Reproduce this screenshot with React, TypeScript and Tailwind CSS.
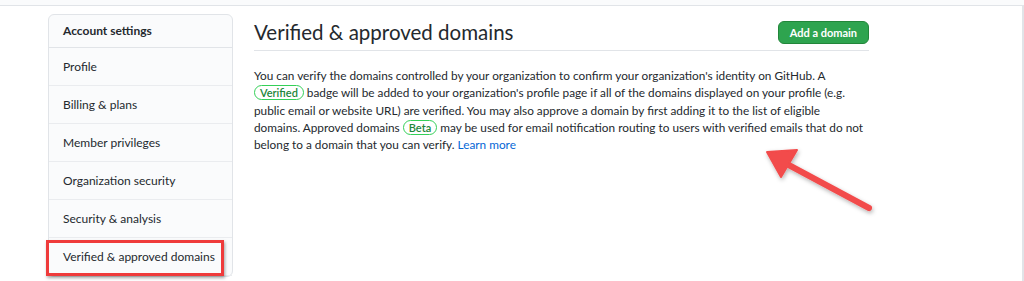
import React from 'react';

const navItems = [
  'Profile',
  'Billing & plans',
  'Member privileges',
  'Organization security',
  'Security & analysis',
  'Verified & approved domains',
];

const Badge = ({ children }: { children: React.ReactNode }) => (
  <span className="inline-block rounded-full border border-[#34d058] px-[5px] text-[11px] leading-[11px] py-[1px] font-semibold text-[#22863a]">
    {children}
  </span>
);

const Arrow = () => (
  <svg className="absolute left-[755px] top-[140px]" width="130" height="85" viewBox="0 0 130 85">
    <defs>
      <filter id="sh" x="-20%" y="-20%" width="140%" height="140%">
        <feDropShadow dx="1" dy="2" stdDeviation="2" floodColor="#000" floodOpacity="0.3" />
      </filter>
    </defs>
    <g filter="url(#sh)" fill="#f24b4b" stroke="#f24b4b">
      <line x1="114" y1="68" x2="30" y2="23" strokeWidth="6" strokeLinecap="round" />
      <polygon points="12,12 42,10 26,37" strokeWidth="2" strokeLinejoin="round" />
    </g>
  </svg>
);

export default function App() {
  return (
    <div className="relative h-[281px] w-[1024px] overflow-hidden bg-white font-['Lato',sans-serif] text-[#24292e]">
      <div className="h-[6px] border-b border-[#e1e4e8] bg-[#fafbfc]" />
      <div className="flex h-[275px] border-r-2 border-[#e1e4e8]">
        <div className="ml-[48px] mt-[8px] w-[185px] shrink-0">
          <div className="rounded-md border border-[#e1e4e8] bg-[#fafbfc]">
            <div className="flex h-[33px] items-center border-b border-[#e1e4e8] px-[14px] text-[12px] font-bold">
              Account settings
            </div>
            {navItems.map((item, i) => (
              <div
                key={item}
                className="relative flex h-[38px] items-center whitespace-nowrap border-b border-[#eaecef] px-[14px] pt-[1px] text-[12px]"
              >
                {item}
                {i === navItems.length - 1 && (
                  <div className="absolute left-[-3px] top-[2px] h-[36px] w-[178px] border-[3px] border-[#ef3b3b] shadow-[1px_2px_3px_rgba(0,0,0,0.35)]" />
                )}
              </div>
            ))}
          </div>
        </div>
        <div className="ml-[21px] w-[615px] shrink-0">
          <div className="mt-[8px] flex h-[37px] items-center justify-between border-b border-[#e1e4e8]">
            <h1 className="text-[20.5px] font-normal leading-none">Verified &amp; approved domains</h1>
            <button className="h-[23px] rounded-md border border-[#22863a] bg-[#2ea44f] px-[11px] text-[11px] font-bold leading-none text-white">
              Add a domain
            </button>
          </div>
          <p className="mt-[16px] text-[11.8px] leading-[17.3px] text-[#24292e]">
            You can verify the domains controlled by your organization to confirm your organization's identity on
            GitHub. A <Badge>Verified</Badge> badge will be added to your organization's profile page if all of the
            domains displayed on your profile (e.g. public email or website URL) are verified. You may also approve a
            domain by first adding it to the list of eligible domains. Approved domains <Badge>Beta</Badge> may be used
            for email notification routing to users with verified emails that do not belong to a domain that you can
            verify. <a className="text-[#0366d6]">Learn more</a>
          </p>
        </div>
      </div>
      <Arrow />
    </div>
  );
}
